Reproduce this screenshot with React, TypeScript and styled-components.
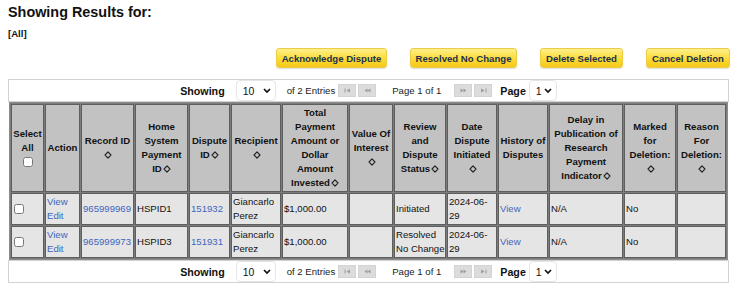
import React from "react";
import styled, { createGlobalStyle } from "styled-components";

const Global = createGlobalStyle`
  html, body { margin: 0; padding: 0; background: #fff; }
  body { font-family: "Liberation Sans", Arial, sans-serif; color: #111; }
`;

const Page = styled.div`
  padding: 4px 3px 0 8px;
  width: 733px;
  box-sizing: border-box;
`;

const Title = styled.h1`
  margin: 0;
  font-size: 14.4px;
  line-height: 17px;
  font-weight: bold;
`;

const Filter = styled.div`
  margin-top: 7px;
  font-size: 9.6px;
  font-weight: bold;
  line-height: 12px;
`;

const ButtonRow = styled.div`
  display: flex;
  justify-content: flex-end;
  gap: 23px;
  margin-top: 8px;
`;

const ActionButton = styled.button<{ $w: number }>`
  font-family: "Liberation Sans", Arial, sans-serif;
  font-size: 9.6px;
  font-weight: bold;
  color: #22304f;
  width: ${(p) => p.$w}px;
  height: 20px;
  padding: 0;
  border: 1px solid #eccb45;
  border-radius: 3px;
  background: linear-gradient(#fff08c, #fadb35 55%, #f5c91a);
  box-shadow: 0 1px 1px rgba(0, 0, 0, 0.12);
  cursor: pointer;
`;

const Panel = styled.div`
  margin-top: 11px;
  width: 721px;
`;

const Pager = styled.div`
  display: flex;
  align-items: center;
  justify-content: center;
  height: 23px;
  box-sizing: border-box;
  border: 1px solid #d2d2d2;
  background: #fff;
  font-size: 9.6px;
  color: #222;
`;

const PagerLabel = styled.span<{ $mr: number }>`
  font-weight: bold;
  font-size: 10.7px;
  color: #111;
  margin-right: ${(p) => p.$mr}px;
`;

const SelectWrap = styled.span<{ $w: number; $mr: number }>`
  position: relative;
  display: inline-flex;
  width: ${(p) => p.$w}px;
  height: 21px;
  margin-right: ${(p) => p.$mr}px;
`;

const Select = styled.select`
  appearance: none;
  -webkit-appearance: none;
  width: 100%;
  height: 100%;
  border: 1px solid #e6e6e6;
  border-radius: 4px;
  background: #fff;
  font-family: "Liberation Sans", Arial, sans-serif;
  font-size: 10.5px;
  color: #111;
  padding: 0 0 0 6px;
  outline: none;
`;

const Chevron = styled.svg`
  position: absolute;
  right: 5px;
  top: 8px;
  pointer-events: none;
`;

const EntriesText = styled.span`
  margin-right: 3px;
`;

const NavBtn = styled.span<{ $mr: number }>`
  display: inline-flex;
  align-items: center;
  justify-content: center;
  width: 18px;
  height: 13px;
  background: #dcdcdc;
  border: 1px solid #d3d3d3;
  box-sizing: border-box;
  margin-right: ${(p) => p.$mr}px;
`;

const PageOf = styled.span`
  margin-right: 13px;
`;

const Table = styled.table`
  width: 719px;
  margin-left: 1px;
  table-layout: fixed;
  border-collapse: separate;
  border-spacing: 1px;
  background: #7c7c7c;
  border: 1px solid #8c8c8c;
  box-sizing: border-box;
`;

const Th = styled.th<{ $w: number }>`
  width: ${(p) => p.$w}px;
  box-sizing: border-box;
  background: #c2c2c2;
  border: 1px solid #5e5e5e;
  font-weight: bold;
  font-size: 9.6px;
  line-height: 14px;
  text-align: center;
  vertical-align: middle;
  padding: 0 1px;
  height: 88px;
  color: #111;
`;

const Td = styled.td`
  box-sizing: border-box;
  background: #e5e5e5;
  border: 1px solid #5e5e5e;
  font-size: 9.6px;
  line-height: 14px;
  padding: 0 0 0 1px;
  height: 32px;
  vertical-align: middle;
  color: #111;
`;

const Link = styled.a`
  color: #4166bd;
  text-decoration: none;
  display: block;
`;

const InlineLink = styled.a`
  color: #4166bd;
  text-decoration: none;
`;

const Check = styled.input`
  margin: 0 0 0 1px;
  width: 10px;
  height: 10px;
  vertical-align: middle;
`;

const SortIcon = () => (
  <svg width="8" height="8" viewBox="0 0 8 8" style={{ verticalAlign: "-1px", marginLeft: 1 }}>
    <path d="M4 0.9 L7 4 L4 7.1 L1 4 Z" fill="none" stroke="#222" strokeWidth="1.1" strokeLinejoin="round" />
  </svg>
);

const NavIcon = ({ kind }: { kind: "first" | "prev" | "next" | "last" }) => {
  const c = "#9c9c9c";
  return (
    <svg width="7" height="5" viewBox="0 0 7 5">
      {kind === "first" && (
        <>
          <rect x="0.5" y="0.5" width="1" height="4" fill={c} />
          <path d="M6 0.5 L2.5 2.5 L6 4.5 Z" fill={c} />
        </>
      )}
      {kind === "prev" && (
        <>
          <path d="M3.5 0.5 L0.5 2.5 L3.5 4.5 Z" fill={c} />
          <path d="M6.5 0.5 L3.5 2.5 L6.5 4.5 Z" fill={c} />
        </>
      )}
      {kind === "next" && (
        <>
          <path d="M0.5 0.5 L3.5 2.5 L0.5 4.5 Z" fill={c} />
          <path d="M3.5 0.5 L6.5 2.5 L3.5 4.5 Z" fill={c} />
        </>
      )}
      {kind === "last" && (
        <>
          <path d="M1 0.5 L4.5 2.5 L1 4.5 Z" fill={c} />
          <rect x="5.5" y="0.5" width="1" height="4" fill={c} />
        </>
      )}
    </svg>
  );
};

const ChevronIcon = () => (
  <Chevron width="8" height="6" viewBox="0 0 8 6">
    <path d="M1 1 L4 4 L7 1" fill="none" stroke="#111" strokeWidth="1.7" />
  </Chevron>
);

const PagerBar = () => (
  <Pager>
    <PagerLabel $mr={11}>Showing</PagerLabel>
    <SelectWrap $w={40} $mr={11}>
      <Select defaultValue="10">
        <option>10</option>
        <option>25</option>
        <option>50</option>
      </Select>
      <ChevronIcon />
    </SelectWrap>
    <EntriesText>of 2 Entries</EntriesText>
    <NavBtn $mr={2}><NavIcon kind="first" /></NavBtn>
    <NavBtn $mr={16}><NavIcon kind="prev" /></NavBtn>
    <PageOf>Page 1 of 1</PageOf>
    <NavBtn $mr={2}><NavIcon kind="next" /></NavBtn>
    <NavBtn $mr={8}><NavIcon kind="last" /></NavBtn>
    <PagerLabel $mr={3}>Page</PagerLabel>
    <SelectWrap $w={28} $mr={0}>
      <Select defaultValue="1">
        <option>1</option>
      </Select>
      <ChevronIcon />
    </SelectWrap>
  </Pager>
);

type Row = {
  record: string;
  hspid: string;
  dispute: string;
  status: React.ReactNode;
};

const rows: Row[] = [
  { record: "965999969", hspid: "HSPID1", dispute: "151932", status: "Initiated" },
  { record: "965999973", hspid: "HSPID3", dispute: "151931", status: <>Resolved<br />No Change</> },
];

export default function App() {
  return (
    <Page>
      <Global />
      <Title>Showing Results for:</Title>
      <Filter>[All]</Filter>
      <ButtonRow>
        <ActionButton $w={111}>Acknowledge Dispute</ActionButton>
        <ActionButton $w={107}>Resolved No Change</ActionButton>
        <ActionButton $w={83}>Delete Selected</ActionButton>
        <ActionButton $w={84}>Cancel Deletion</ActionButton>
      </ButtonRow>
      <Panel>
        <PagerBar />
        <Table>
          <thead>
            <tr>
              <Th $w={33}>Select All<br /><Check type="checkbox" /></Th>
              <Th $w={35}>Action</Th>
              <Th $w={53}>Record ID<br /><SortIcon /></Th>
              <Th $w={53}>Home System Payment ID<SortIcon /></Th>
              <Th $w={41}>Dispute ID<SortIcon /></Th>
              <Th $w={50}>Recipient<br /><SortIcon /></Th>
              <Th $w={66}>Total Payment Amount or Dollar Amount Invested<SortIcon /></Th>
              <Th $w={44}>Value Of Interest<br /><SortIcon /></Th>
              <Th $w={52}>Review and Dispute Status<SortIcon /></Th>
              <Th $w={50}>Date Dispute Initiated<br /><SortIcon /></Th>
              <Th $w={50}>History of Disputes</Th>
              <Th $w={74}>Delay in Publication of Research Payment Indicator<SortIcon /></Th>
              <Th $w={52}>Marked for Deletion:<br /><SortIcon /></Th>
              <Th $w={49}>Reason For Deletion:<br /><SortIcon /></Th>
            </tr>
          </thead>
          <tbody>
            {rows.map((r) => (
              <tr key={r.record}>
                <Td><Check type="checkbox" /></Td>
                <Td>
                  <Link href="#">View</Link>
                  <Link href="#">Edit</Link>
                </Td>
                <Td><InlineLink href="#">{r.record}</InlineLink></Td>
                <Td>{r.hspid}</Td>
                <Td><InlineLink href="#">{r.dispute}</InlineLink></Td>
                <Td>Giancarlo Perez</Td>
                <Td>$1,000.00</Td>
                <Td></Td>
                <Td>{r.status}</Td>
                <Td>2024-06-<br />29</Td>
                <Td><InlineLink href="#">View</InlineLink></Td>
                <Td>N/A</Td>
                <Td>No</Td>
                <Td></Td>
              </tr>
            ))}
          </tbody>
        </Table>
        <PagerBar />
      </Panel>
    </Page>
  );
}
